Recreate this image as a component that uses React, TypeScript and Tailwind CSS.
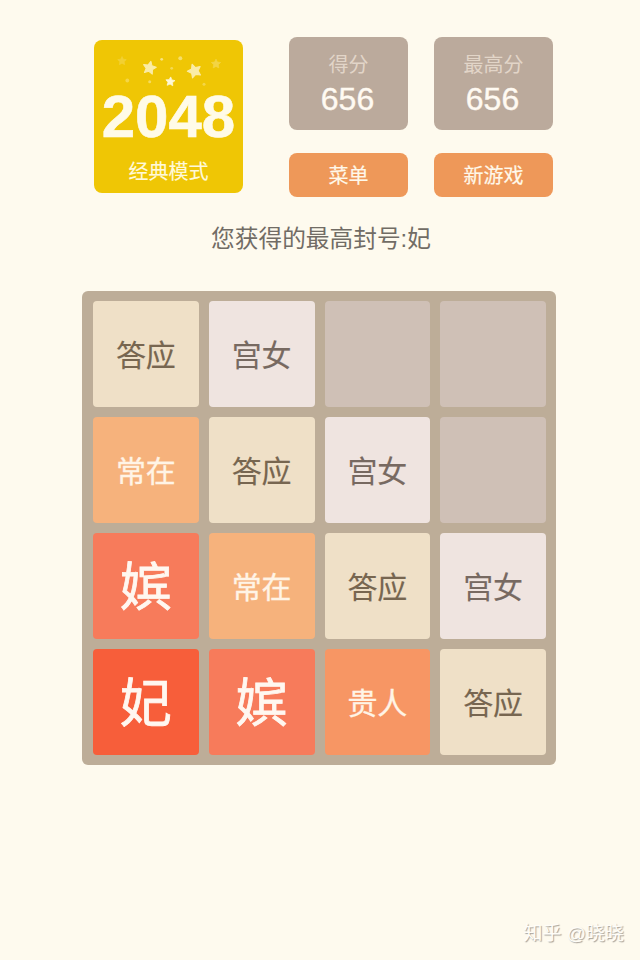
import React from "react";

type Kind = "empty" | "gongnv" | "daying" | "changzai" | "guiren" | "pin" | "fei";

const tiles: Record<Kind, { label: string; className: string }> = {
  empty: { label: "", className: "bg-[#cfc0b6]" },
  gongnv: { label: "宫女", className: "bg-[#efe4e0] pt-[3px] text-[#776961] text-[30px] [-webkit-text-stroke:0.15px_#776961]" },
  daying: { label: "答应", className: "bg-[#efe0c7] pt-[3px] text-[#776650] text-[30px] [-webkit-text-stroke:0.15px_#776650]" },
  changzai: { label: "常在", className: "bg-[#f6b27c] pt-[3px] text-[#fff4e6] text-[30px] [-webkit-text-stroke:0.3px_#fff4e6]" },
  guiren: { label: "贵人", className: "bg-[#f79664] pt-[3px] text-[#fff4e6] text-[30px] [-webkit-text-stroke:0.3px_#fff4e6]" },
  pin: { label: "嫔", className: "bg-[#f77b5b] pt-[3px] text-[#fff7f0] text-[52px] [-webkit-text-stroke:0.8px_#fff7f0]" },
  fei: { label: "妃", className: "bg-[#f75e3a] pt-[3px] text-[#fff7f0] text-[52px] [-webkit-text-stroke:0.8px_#fff7f0]" },
};

const board: Kind[] = [
  "daying", "gongnv", "empty", "empty",
  "changzai", "daying", "gongnv", "empty",
  "pin", "changzai", "daying", "gongnv",
  "fei", "pin", "guiren", "daying",
];

const STAR = "M0-1 .29-.4.95-.31.48.15.59.81 0 .5-.59.81-.48.15-.95-.31-.29-.4Z";

const stars = [
  { x: 55.5, y: 28, r: 6.8, a: 12, o: 0.72 },
  { x: 100.5, y: 31, r: 7.2, a: -20, o: 0.72 },
  { x: 28, y: 21, r: 4.5, a: 0, o: 0.2 },
  { x: 122, y: 24, r: 4.8, a: 0, o: 0.28 },
  { x: 76.3, y: 41.7, r: 4.8, a: 5, o: 0.95 },
];

const dots = [
  { x: 67.7, y: 19.3, r: 1.4, o: 0.55 },
  { x: 86.3, y: 18.2, r: 2, o: 0.45 },
  { x: 77.7, y: 28.3, r: 1.4, o: 0.35 },
  { x: 55.7, y: 41.7, r: 1.5, o: 0.4 },
  { x: 33.3, y: 40.5, r: 1.9, o: 0.3 },
  { x: 110, y: 44.3, r: 1.5, o: 0.3 },
];

function Logo() {
  return (
    <div className="relative flex h-[153px] w-[149px] flex-col items-center rounded-lg bg-[#efc605] pt-[45px]">
      <svg className="absolute left-0 top-0" width="149" height="60" fill="#fffbe5" stroke="#fffbe5" strokeLinejoin="round">
        {stars.map((s, i) => (
          <path key={i} d={STAR} opacity={s.o} strokeWidth={0.15} transform={`translate(${s.x} ${s.y}) rotate(${s.a}) scale(${s.r})`} />
        ))}
        {dots.map((d, i) => (
          <circle key={i} cx={d.x} cy={d.y} r={d.r} opacity={d.o} stroke="none" />
        ))}
      </svg>
      <div className="h-[64px] text-[60px] font-bold leading-[64px] text-[#fffbe8] [-webkit-text-stroke:0.6px_#fffbe8]">2048</div>
      <div className="mt-[10px] text-[20px] leading-[26px] text-[#fff9d9] [-webkit-text-stroke:0.15px_#fff9d9]">经典模式</div>
    </div>
  );
}

function Panel({ label, value, action }: { label: string; value: string; action: string }) {
  return (
    <div className="flex w-[119px] flex-col items-center">
      <div className="flex h-[93px] w-full flex-col items-center rounded-lg bg-[#bbaa9c] pt-[15px]">
        <div className="text-[20px] leading-[26px] text-[#e2d5c8]">{label}</div>
        <div className="mt-[3px] pr-[2px] text-[32px] leading-[36px] text-[#fffaf2] [-webkit-text-stroke:0.4px_#fffaf2]">{value}</div>
      </div>
      <button className="mt-[23px] h-[44px] w-full rounded-lg bg-[#ee9859] pt-px text-[20px] leading-[44px] text-[#fff8ea] [-webkit-text-stroke:0.2px_#fff8ea]">
        {action}
      </button>
    </div>
  );
}

export default function App() {
  return (
    <main className="flex h-[960px] w-[640px] flex-col overflow-hidden bg-[#fefaee] font-['Liberation_Sans','Noto_Sans_CJK_SC',sans-serif]">
      <header className="flex pl-[94px] pt-[37px]">
        <div className="mt-[3px]">
          <Logo />
        </div>
        <div className="ml-[46px] flex gap-[26px]">
          <Panel label="得分" value="656" action="菜单" />
          <Panel label="最高分" value="656" action="新游戏" />
        </div>
      </header>
      <p className="mt-[24px] pl-[2px] text-center text-[23.7px] leading-[36px] text-[#716c65]">您获得的最高封号:妃</p>
      <section className="ml-[82px] mt-[34px] grid h-[474px] w-[474px] grid-cols-4 grid-rows-4 gap-[10px] rounded-md bg-[#bdad98] py-[10px] pl-[11px] pr-[10px]">
        {board.map((kind, i) => (
          <div key={i} className={`flex min-h-0 items-center justify-center rounded leading-none ${tiles[kind].className}`}>
            {tiles[kind].label}
          </div>
        ))}
      </section>
      <footer className="mt-auto flex h-[54px] items-center justify-end pr-[16px] text-[19px] text-[#fffdf8] [text-shadow:1px_1px_1px_#a5a098]">
        <span className="pt-[2px]">知乎 @晓晓</span>
      </footer>
    </main>
  );
}
